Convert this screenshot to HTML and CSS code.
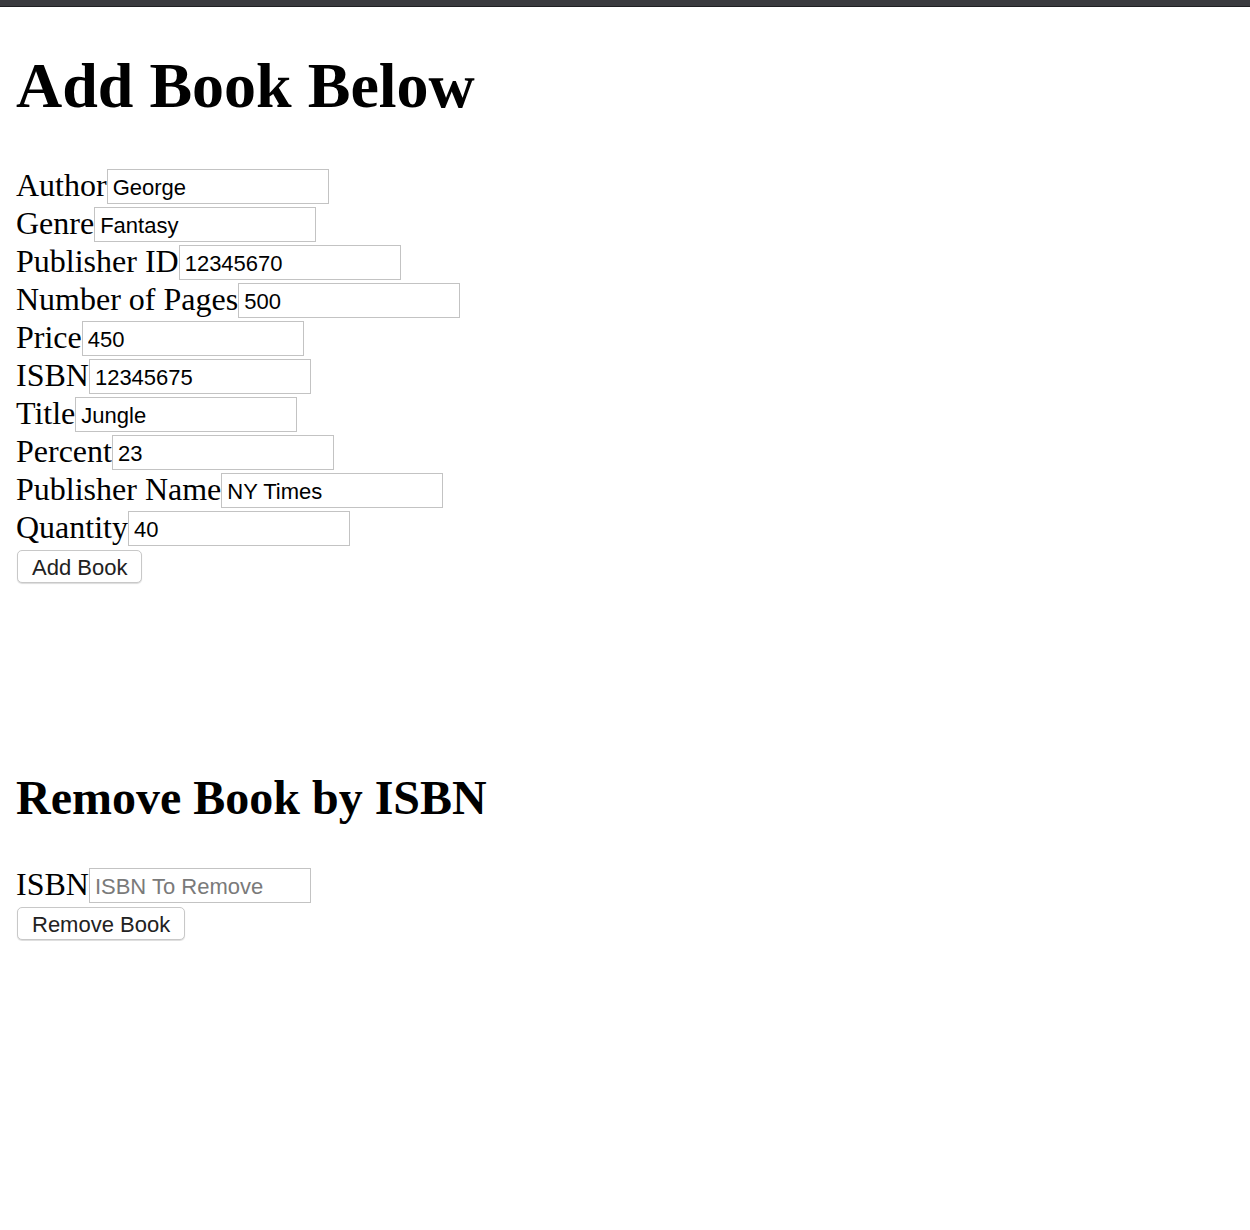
FILE: index.html
```html
<!DOCTYPE html>
<html lang="en">
<head>
<meta charset="utf-8">
<title>Books</title>
<link rel="stylesheet" href="styles.css">
</head>
<body>
<div class="topbar"></div>
<main class="page">
  <h1 class="title">Add Book Below</h1>
  <form class="book-form add-form">
    <div class="row"><label for="author">Author</label><input id="author" type="text" value="George"></div>
    <div class="row"><label for="genre">Genre</label><input id="genre" type="text" value="Fantasy"></div>
    <div class="row"><label for="pubid">Publisher ID</label><input id="pubid" type="text" value="12345670"></div>
    <div class="row"><label for="pages">Number of Pages</label><input id="pages" type="text" value="500"></div>
    <div class="row"><label for="price">Price</label><input id="price" type="text" value="450"></div>
    <div class="row"><label for="isbn">ISBN</label><input id="isbn" type="text" value="12345675"></div>
    <div class="row"><label for="title">Title</label><input id="title" type="text" value="Jungle"></div>
    <div class="row"><label for="percent">Percent</label><input id="percent" type="text" value="23"></div>
    <div class="row"><label for="pubname">Publisher Name</label><input id="pubname" type="text" value="NY Times"></div>
    <div class="row"><label for="qty">Quantity</label><input id="qty" type="text" value="40"></div>
    <div class="row"><button type="button" class="btn">Add Book</button></div>
  </form>
  <h2 class="subtitle">Remove Book by ISBN</h2>
  <form class="book-form">
    <div class="row"><label for="risbn">ISBN</label><input id="risbn" type="text" placeholder="ISBN To Remove"></div>
    <div class="row"><button type="button" class="btn">Remove Book</button></div>
  </form>
</main>
</body>
</html>
```
FILE: styles.css
```css
html, body {
  margin: 0;
  padding: 0;
  background: #ffffff;
}

body {
  font-family: "Liberation Serif", "Times New Roman", serif;
  color: #000;
}

.topbar {
  height: 6px;
  background: #3a3b3f;
  border-bottom: 1px solid #1f2023;
}

.page {
  padding: 0 16px;
}

.title {
  font-size: 64px;
  font-weight: bold;
  line-height: 74px;
  margin: 42px 0 43px;
}

.subtitle {
  font-size: 48px;
  font-weight: bold;
  line-height: 55px;
  margin: 0 0 40px;
}

.book-form {
  margin: 0;
}

.add-form {
  margin-bottom: 186px;
}

.row {
  display: flex;
  align-items: flex-start;
  height: 38px;
}

.row label {
  font-size: 32px;
  line-height: 38px;
  white-space: nowrap;
}

.row input {
  box-sizing: border-box;
  width: 222px;
  height: 35px;
  margin: 3px 0 0;
  padding: 3px 5px 0;
  border: 1px solid #c3c3c3;
  border-radius: 0;
  background: #fff;
  font-family: "Liberation Sans", Arial, sans-serif;
  font-size: 22px;
  color: #000;
  outline: none;
}

.row input::placeholder {
  color: #7a7a7a;
}

.btn {
  box-sizing: border-box;
  height: 33px;
  margin: 4px 0 0 1px;
  padding: 2px 14px 0;
  border: 1px solid #c8c8c8;
  border-radius: 5px;
  background: #fff;
  box-shadow: 0 1px 1px rgba(0, 0, 0, 0.14);
  font-family: "Liberation Sans", Arial, sans-serif;
  font-size: 22px;
  line-height: 29px;
  color: #222;
}
```
